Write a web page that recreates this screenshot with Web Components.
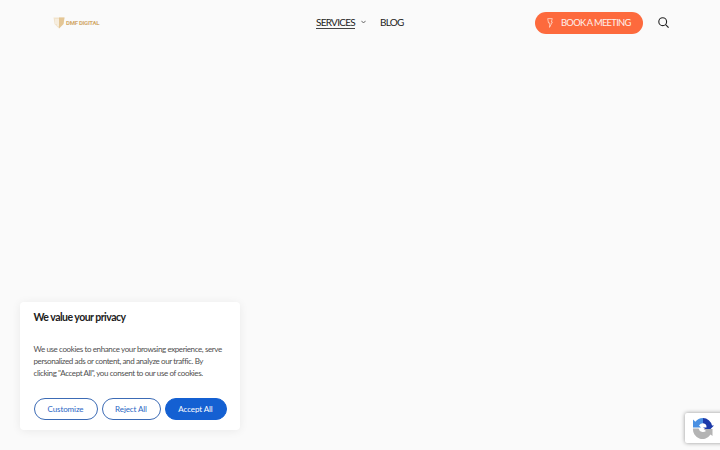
<!DOCTYPE html>
<html><head><meta charset="utf-8"><style>
html,body{margin:0;height:100%}
body{width:720px;height:450px;overflow:hidden;background:#fafafa;font-family:Lato,"Liberation Sans",sans-serif;position:relative}
</style></head><body>
<site-header></site-header>
<cookie-card></cookie-card>
<recaptcha-badge></recaptcha-badge>
<script>
function def(name,html){customElements.define(name,class extends HTMLElement{constructor(){super();this.attachShadow({mode:'open'}).innerHTML=html}})}
def('site-header',`<style>
:host{display:flex;align-items:center;height:45px;padding:0 51px 0 53px;box-sizing:border-box;font-family:Lato,"Liberation Sans",sans-serif;color:#222}
.logo{display:flex;align-items:center;gap:1px;width:263px;flex:none}
.logo span{font:700 6px "Roboto",sans-serif;letter-spacing:-.25px;color:#d2a96a}
nav{display:flex;align-items:center;font-size:10px;letter-spacing:-.72px;flex:none;line-height:11px;padding-bottom:1px}
.svc{border-bottom:1px solid #444;padding:1px 0 0}
.chev{margin:0 14px 0 6px;display:block}
.grow{flex:1}
.btn{display:flex;align-items:center;height:22px;width:108px;box-sizing:border-box;padding-left:12px;background:#fd6a3d;color:#fff;border-radius:11px;font-size:9.400px;letter-spacing:-.7px;white-space:nowrap}
.btn svg{margin-right:8px;flex:none}
.btn span{opacity:.9}
.search{margin-left:15px;display:block}
</style>
<div class="logo"><svg width="12" height="13" viewBox="0 0 12 13"><path d="M.5 1.500h11l-1 6.500L6 12.500 1.500 8z" fill="#f1e3cc"/><path d="M6 1.500h5.500l-1 6.500L6 12.500z" fill="#e4c695"/><path d="M3 3v5M5 3v7" stroke="#fff" stroke-width=".7"/></svg><span>DMF DIGITAL</span></div>
<nav><span class="svc">SERVICES</span><svg class="chev" width="5" height="4" viewBox="0 0 5 4"><path d="M.4.8 2.500 3 4.600.8" fill="none" stroke="#444" stroke-width=".8"/></svg><span>BLOG</span></nav>
<span class="grow"></span>
<div class="btn"><svg width="6" height="10" viewBox="0 0 6 10"><path d="M.7.6h4.600L4.300 4H5.400L2.500 9.400 2.900 5H1.500z" fill="none" stroke="#ffe0d3" stroke-width=".75"/></svg><span>BOOK A MEETING</span></div>
<svg class="search" width="11" height="11" viewBox="0 0 11 11"><circle cx="4.700" cy="4.700" r="3.900" fill="none" stroke="#222" stroke-width="1.100"/><path d="M7.600 7.600 10.600 10.600" stroke="#222" stroke-width="1.200"/></svg>`);
def('cookie-card',`<style>
:host{position:absolute;left:20px;top:302px;width:220px;height:128px;box-sizing:border-box;padding:9px 13px 0 13.500px;background:#fff;border-radius:4px;box-shadow:0 1px 10px rgba(0,0,0,.07);font-family:Lato,"Liberation Sans",sans-serif;display:flex;flex-direction:column}
h2{margin:0;font-size:10.500px;line-height:13px;font-weight:700;color:#212121;letter-spacing:-.52px;white-space:nowrap}
p{margin:19px 0 0;font-size:8px;line-height:12px;color:#4f4f4f;letter-spacing:-.39px;white-space:nowrap}
.row{display:flex;gap:4px;margin-top:19px}
.b{height:22px;box-sizing:border-box;border:1px solid #3c6bb5;border-radius:11px;display:flex;align-items:center;justify-content:center;font-size:8px;letter-spacing:-.1px;color:#2a66c4;background:#fff}
.a{background:#1460d2;color:#fff;border-color:#1460d2}
</style>
<h2>We value your privacy</h2>
<p>We use cookies to enhance your browsing experience, serve<br>personalized ads or content, and analyze our traffic. By<br>clicking "Accept All", you consent to our use of cookies.</p>
<div class="row"><div class="b" style="width:64px">Customize</div><div class="b" style="width:59px">Reject All</div><div class="b a" style="width:62px">Accept All</div></div>`);
def('recaptcha-badge',`<style>
:host{position:absolute;left:685px;top:413px;width:40px;height:30px;background:#fff;box-shadow:0 0 4px rgba(0,0,0,.4);border-radius:2px;display:flex;align-items:center}
svg{margin-left:7px;display:block}
</style>
<svg width="22" height="24" viewBox="0 0 22 24"><path d="M1 11.500V3.500L3.300 5.800A9.500 9.500 0 0 1 11 2V7.200A4.600 4.600 0 0 0 7 9.500L9 11.500z" fill="#4a90e2"/><path d="M11 2A9.500 9.500 0 0 1 20 9.500H22L16.500 15 11 11.500H14.500A4 4 0 0 0 11 7.200z" fill="#1c3aa9"/><path d="M1 12.500H6.600A4.600 4.600 0 0 0 14 15L11.500 13H20.500V20L18.500 18.500A9.500 9.500 0 0 1 1 12.500z" fill="#b4b4b4"/></svg>`);
</script></body></html>
